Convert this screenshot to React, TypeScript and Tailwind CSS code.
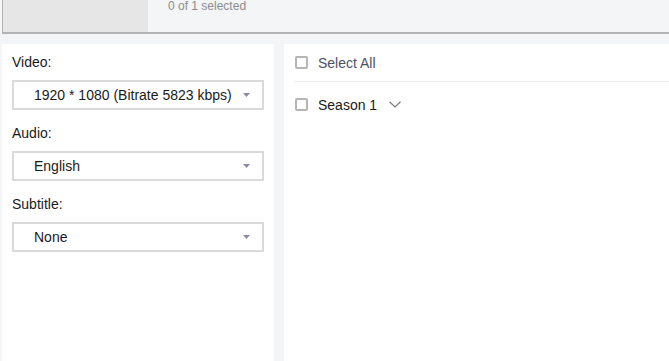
import React from "react";

function Arrow() {
  return (
    <svg width="7" height="4" viewBox="0 0 7 4" className="shrink-0">
      <path d="M0 0 L7 0 L3.5 4 Z" fill="#8d89a6" />
    </svg>
  );
}

function SelectBox({ value }: { value: string }) {
  return (
    <div className="flex h-[30px] w-full items-center justify-between border-2 border-[#dadada] bg-white pl-[20px] pr-[12px]">
      <span className="text-[14px] leading-[16px] text-[#1a1a1a]">{value}</span>
      <Arrow />
    </div>
  );
}

function Field({ label, value }: { label: string; value: string }) {
  return (
    <div className="flex flex-col">
      <div className="h-[16px] text-[14px] leading-[16px] text-[#1a1a1a]">{label}</div>
      <div className="mt-[10px]">
        <SelectBox value={value} />
      </div>
    </div>
  );
}

function Check() {
  return <div className="h-[13px] w-[13px] shrink-0 rounded-[2px] border-2 border-[#b5b5b5] bg-white" />;
}

export default function App() {
  return (
    <div
      className="flex h-[361px] w-[669px] flex-col overflow-hidden bg-[#f4f5f7]"
      style={{ fontFamily: '"Liberation Sans", Arial, sans-serif' }}
    >
      <div className="ml-[2px] flex h-[34px] shrink-0 border-b-2 border-l border-[#b3b3b3]">
        <div className="h-full w-[145px] bg-[#e6e6e6]" />
        <div className="pl-[20px] text-[12px] leading-[12px] text-[#8c8c8c]">0 of 1 selected</div>
      </div>
      <div className="mt-[10px] flex flex-1 gap-[10px] pl-[2px]">
        <div className="flex w-[272px] flex-col gap-[15px] bg-white px-[10px] pt-[10px]">
          <Field label="Video:" value="1920 * 1080 (Bitrate 5823 kbps)" />
          <Field label="Audio:" value="English" />
          <Field label="Subtitle:" value="None" />
        </div>
        <div className="flex flex-1 flex-col bg-white">
          <div className="ml-[10px] flex h-[38px] items-center border-b border-[#ececec]">
            <div className="ml-[1px]">
              <Check />
            </div>
            <span className="ml-[10px] text-[14px] leading-[16px] text-[#4e5163]">Select All</span>
          </div>
          <div className="ml-[11px] flex h-[45px] items-center">
            <Check />
            <span className="ml-[10px] text-[14px] leading-[16px] text-[#1a1a1a]">Season 1</span>
            <svg width="12" height="7" viewBox="0 0 12 7" className="ml-[12px]">
              <path d="M0.5 0.8 L6 6 L11.5 0.8" fill="none" stroke="#7a7a7a" strokeWidth="1.2" />
            </svg>
          </div>
        </div>
      </div>
    </div>
  );
}
